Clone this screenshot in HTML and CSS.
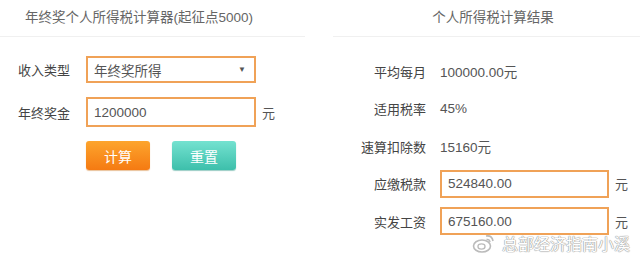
FILE: index.html
```html
<!DOCTYPE html>
<html lang="zh-CN">
<head>
    <meta charset="UTF-8">
    <title>年终奖个人所得税计算器</title>
    <link rel="stylesheet" href="styles.css">
</head>
<body>
    <div class="page">
        <!-- 左侧：输入 -->
        <div class="panel panel-left">
            <div class="panel-title title-left">年终奖个人所得税计算器(起征点5000)</div>
            <form class="calc-form">
                <div class="form-row">
                    <label class="form-label">收入类型</label>
                    <div class="field select-field">
                        <span>年终奖所得</span>
                        <span class="arrow">▼</span>
                    </div>
                </div>
                <div class="form-row">
                    <label class="form-label">年终奖金</label>
                    <div class="field input-field">1200000</div>
                    <span class="unit">元</span>
                </div>
                <div class="btn-row">
                    <button type="button" class="btn btn-calc">计算</button>
                    <button type="button" class="btn btn-reset">重置</button>
                </div>
            </form>
        </div>

        <!-- 右侧：结果 -->
        <div class="panel panel-right">
            <div class="panel-title title-right">个人所得税计算结果</div>
            <div class="result-list">
                <div class="result-row">
                    <span class="result-label">平均每月</span>
                    <span class="result-value">100000.00元</span>
                </div>
                <div class="result-row">
                    <span class="result-label">适用税率</span>
                    <span class="result-value">45%</span>
                </div>
                <div class="result-row">
                    <span class="result-label">速算扣除数</span>
                    <span class="result-value">15160元</span>
                </div>
                <div class="result-row">
                    <span class="result-label">应缴税款</span>
                    <div class="field result-field">524840.00</div>
                    <span class="unit">元</span>
                </div>
                <div class="result-row">
                    <span class="result-label">实发工资</span>
                    <div class="field result-field">675160.00</div>
                    <span class="unit">元</span>
                </div>
            </div>
        </div>
    </div>

    <div class="watermark">
        <svg class="weibo" width="24" height="22" viewBox="0 0 24 22">
            <ellipse cx="10" cy="14" rx="8.5" ry="6" fill="none" stroke="#bbb" stroke-width="1.6"/>
            <ellipse cx="9.5" cy="14.5" rx="3.5" ry="2.6" fill="none" stroke="#bbb" stroke-width="1.4"/>
            <path d="M14 4 q6 -1 7 5" fill="none" stroke="#bbb" stroke-width="1.6"/>
            <path d="M14.5 7.5 q3 -0.5 3.5 2.5" fill="none" stroke="#bbb" stroke-width="1.4"/>
        </svg>
        <span class="watermark-text">总部经济指南小溪</span>
    </div>
</body>
</html>
```

FILE: styles.css
```css
body {
    margin: 0;
    font-family: 'Liberation Sans', 'Noto Sans CJK SC', sans-serif;
    font-size: 13px;
    color: #333;
    background: #fff;
    position: relative;
    width: 640px;
    height: 260px;
    overflow: hidden;
}
.page {
    display: flex;
    gap: 28px;
}
.panel-left {
    width: 305px;
}
.panel-right {
    width: 307px;
}
.panel-title {
    height: 36px;
    line-height: 36px;
    font-size: 13.5px;
    color: #666;
    text-align: center;
    border-bottom: 1px solid #f0f0f0;
}
.title-left {
    padding-right: 27px;
}
.title-right {
    padding-left: 13px;
}

/* 左侧表单 */
.calc-form {
    padding: 19px 0 0 18px;
    display: flex;
    flex-direction: column;
    gap: 14px;
}
.form-row {
    display: flex;
    align-items: center;
}
.form-label {
    width: 68px;
    font-size: 13px;
    color: #444;
}
.field {
    box-sizing: border-box;
    border: 2px solid #f0a257;
    background: #fff;
    color: #555;
    font-size: 13.5px;
    padding-left: 6px;
    display: flex;
    align-items: center;
}
.select-field {
    width: 170px;
    height: 27px;
    justify-content: space-between;
    padding-right: 8px;
}
.arrow {
    font-size: 8px;
    color: #555;
}
.input-field {
    width: 170px;
    height: 30px;
}
.unit {
    margin-left: 6px;
    color: #555;
    font-size: 13px;
}
.btn-row {
    display: flex;
    gap: 22px;
    padding-left: 68px;
}
.btn {
    width: 64px;
    height: 29px;
    border: none;
    border-radius: 3px;
    color: #fff;
    font-family: inherit;
    font-size: 14px;
    cursor: pointer;
}
.btn-calc {
    background: linear-gradient(#fda52d, #f57a12);
    box-shadow: 0 1px 1px rgba(200, 100, 0, 0.4);
}
.btn-reset {
    background: linear-gradient(#74e2d0, #3dbfab);
    box-shadow: 0 1px 1px rgba(0, 130, 110, 0.4);
}

/* 右侧结果 */
.result-list {
    padding-top: 15.5px;
}
.result-row {
    height: 37.5px;
    display: flex;
    align-items: center;
}
.result-label {
    width: 93px;
    text-align: right;
    margin-right: 14px;
    color: #444;
}
.result-value {
    color: #555;
    font-size: 13.5px;
}
.result-field {
    width: 169px;
    height: 28px;
}

/* 水印 */
.watermark {
    position: absolute;
    left: 472px;
    top: 231px;
    display: flex;
    align-items: center;
    gap: 6px;
}
.watermark-text {
    font-size: 16px;
    color: #fff;
    text-shadow: 0 0 1px #999, 0 0 1px #999, 0 0 1px #999;
}
```
